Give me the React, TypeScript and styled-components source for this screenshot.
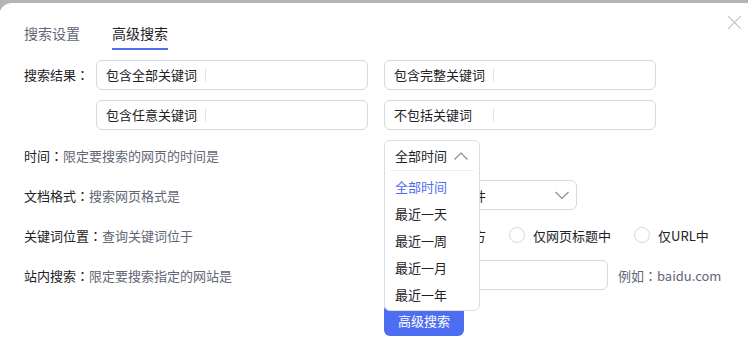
import React, { FC } from "react";
import styled, { createGlobalStyle } from "styled-components";

const BLUE = "#4e6ef2";
const TEXT = "#222226";
const MUTED = "#626675";
const BORDER = "#d7d9e0";

const GlobalStyle = createGlobalStyle`
  html, body {
    margin: 0;
    padding: 0;
    background: #b4b4b4;
    overflow: hidden;
  }
  body {
    font-family: "Noto Sans CJK SC", "Noto Sans", "Liberation Sans", sans-serif;
    font-size: 13px;
    color: ${TEXT};
  }
`;

const Dialog = styled.div`
  position: relative;
  box-sizing: border-box;
  width: 760px;
  height: 362px;
  margin-top: 3px;
  margin-left: -1px;
  padding: 20px 0 0 25px;
  background: #fff;
  border-radius: 13px;
`;

const CloseButton = styled.button`
  position: absolute;
  top: 10px;
  right: 16px;
  width: 18px;
  height: 18px;
  padding: 0;
  border: 0;
  background: none;
  color: #c6c8d0;
  display: flex;
  align-items: center;
  justify-content: center;
`;

const Tabs = styled.div`
  display: flex;
  gap: 32px;
`;

const Tab = styled.div<{ $active?: boolean }>`
  font-size: 14px;
  line-height: 20px;
  padding-bottom: 5px;
  color: ${({ $active }) => ($active ? TEXT : MUTED)};
  border-bottom: 2px solid ${({ $active }) => ($active ? BLUE : "transparent")};
`;

/* centred full-width colon, as in the reference */
const Colon = styled.span`
  font-family: "Noto Sans CJK TC", "Noto Sans CJK SC", sans-serif;
`;

const KeywordSection = styled.div`
  display: flex;
  margin-top: 10px;
`;

const KeywordLabel = styled.div`
  width: 72px;
  line-height: 30px;
  flex-shrink: 0;
`;

const KeywordGrid = styled.div`
  display: grid;
  grid-template-columns: 272px 272px;
  gap: 10px 16px;
`;

const Field = styled.div<{ $width?: number }>`
  box-sizing: border-box;
  display: flex;
  align-items: center;
  width: ${({ $width }) => ($width ? `${$width}px` : "auto")};
  height: 30px;
  border: 1px solid ${BORDER};
  border-radius: 6px;
  background: #fff;
`;

const FieldTag = styled.span`
  box-sizing: border-box;
  width: 109px;
  padding-left: 9px;
  color: ${TEXT};
  border-right: 1px solid #e2e3e8;
  line-height: 14px;
  white-space: nowrap;
`;

const Row = styled.div`
  display: flex;
  align-items: center;
  height: 30px;
  margin-top: 10px;
`;

const RowLabel = styled.div`
  width: 360px;
  flex-shrink: 0;
  color: ${TEXT};
  .desc {
    color: ${MUTED};
  }
`;

const SelectWrap = styled.div`
  position: relative;
  width: 96px;
  height: 30px;
`;

const SelectBox = styled.div<{ $width: number }>`
  box-sizing: border-box;
  width: ${({ $width }) => $width}px;
  height: 30px;
  display: flex;
  align-items: center;
  justify-content: space-between;
  padding: 0 6px 0 10px;
  border: 1px solid ${BORDER};
  border-radius: 6px;
  background: #fff;
`;

const Dropdown = styled.div`
  position: absolute;
  top: 0;
  left: 0;
  z-index: 5;
  box-sizing: border-box;
  width: 96px;
  padding-bottom: 2px;
  border: 1px solid #dcdde3;
  border-radius: 6px;
  background: #fff;
`;

const DropdownHead = styled.div`
  display: flex;
  align-items: center;
  justify-content: space-between;
  height: 29px;
  margin: 0 5px 2px;
  padding: 0 5px;
  border-bottom: 1px solid #eeeff2;
`;

const Option = styled.div<{ $active?: boolean }>`
  height: 27px;
  line-height: 27px;
  padding-left: 10px;
  color: ${({ $active }) => ($active ? BLUE : TEXT)};
`;

const RadioGroup = styled.div`
  display: flex;
  align-items: center;
  gap: 23px;
`;

const RadioItem = styled.label`
  display: flex;
  align-items: center;
  gap: 8px;
  white-space: nowrap;
`;

const RadioCircle = styled.span`
  box-sizing: border-box;
  width: 16px;
  height: 16px;
  border: 1px solid ${BORDER};
  border-radius: 50%;
  background: #fff;
`;

const Hint = styled.span`
  margin-left: 10px;
  color: ${MUTED};
`;

const ActionRow = styled.div`
  padding-left: 360px;
  margin-top: 14px;
`;

const SubmitButton = styled.button`
  width: 80px;
  height: 32px;
  border: 0;
  border-radius: 6px;
  background: ${BLUE};
  color: #fff;
  font-family: inherit;
  font-size: 13px;
  padding: 0;
`;

const Chevron: FC<{ up?: boolean }> = ({ up }) => (
  <svg width="16" height="10" viewBox="0 0 16 10" fill="none">
    <path
      d={up ? "M1.5 8.5 L8 2 L14.5 8.5" : "M1.5 2 L8 8.5 L14.5 2"}
      stroke="#8b8e98"
      strokeWidth="1.2"
    />
  </svg>
);

const timeOptions = ["全部时间", "最近一天", "最近一周", "最近一月", "最近一年"];

const Label: FC<{ title: string; desc: string }> = ({ title, desc }) => (
  <RowLabel>
    {title}
    <Colon>：</Colon>
    <span className="desc">{desc}</span>
  </RowLabel>
);

export default function App() {
  return (
    <>
      <GlobalStyle />
      <Dialog>
        <CloseButton aria-label="关闭">
          <svg width="15" height="15" viewBox="0 0 15 15">
            <path d="M1 1 L14 14 M14 1 L1 14" stroke="currentColor" strokeWidth="1.2" />
          </svg>
        </CloseButton>
        <Tabs>
          <Tab>搜索设置</Tab>
          <Tab $active>高级搜索</Tab>
        </Tabs>

        <KeywordSection>
          <KeywordLabel>
            搜索结果<Colon>：</Colon>
          </KeywordLabel>
          <KeywordGrid>
            <Field>
              <FieldTag>包含全部关键词</FieldTag>
            </Field>
            <Field>
              <FieldTag>包含完整关键词</FieldTag>
            </Field>
            <Field>
              <FieldTag>包含任意关键词</FieldTag>
            </Field>
            <Field>
              <FieldTag>不包括关键词</FieldTag>
            </Field>
          </KeywordGrid>
        </KeywordSection>

        <Row>
          <Label title="时间" desc="限定要搜索的网页的时间是" />
          <SelectWrap>
            <Dropdown>
              <DropdownHead>
                全部时间
                <Chevron up />
              </DropdownHead>
              {timeOptions.map((o, i) => (
                <Option key={o} $active={i === 0}>
                  {o}
                </Option>
              ))}
            </Dropdown>
          </SelectWrap>
        </Row>

        <Row>
          <Label title="文档格式" desc="搜索网页格式是" />
          <SelectBox $width={193}>
            所有网页和文件
            <Chevron />
          </SelectBox>
        </Row>

        <Row>
          <Label title="关键词位置" desc="查询关键词位于" />
          <RadioGroup>
            <RadioItem>
              <RadioCircle />
              网页任何地方
            </RadioItem>
            <RadioItem>
              <RadioCircle />
              仅网页标题中
            </RadioItem>
            <RadioItem>
              <RadioCircle />
              仅URL中
            </RadioItem>
          </RadioGroup>
        </Row>

        <Row>
          <Label title="站内搜索" desc="限定要搜索指定的网站是" />
          <Field $width={224} />
          <Hint>
            例如<Colon>：</Colon>baidu.com
          </Hint>
        </Row>

        <ActionRow>
          <SubmitButton>高级搜索</SubmitButton>
        </ActionRow>
      </Dialog>
    </>
  );
}
